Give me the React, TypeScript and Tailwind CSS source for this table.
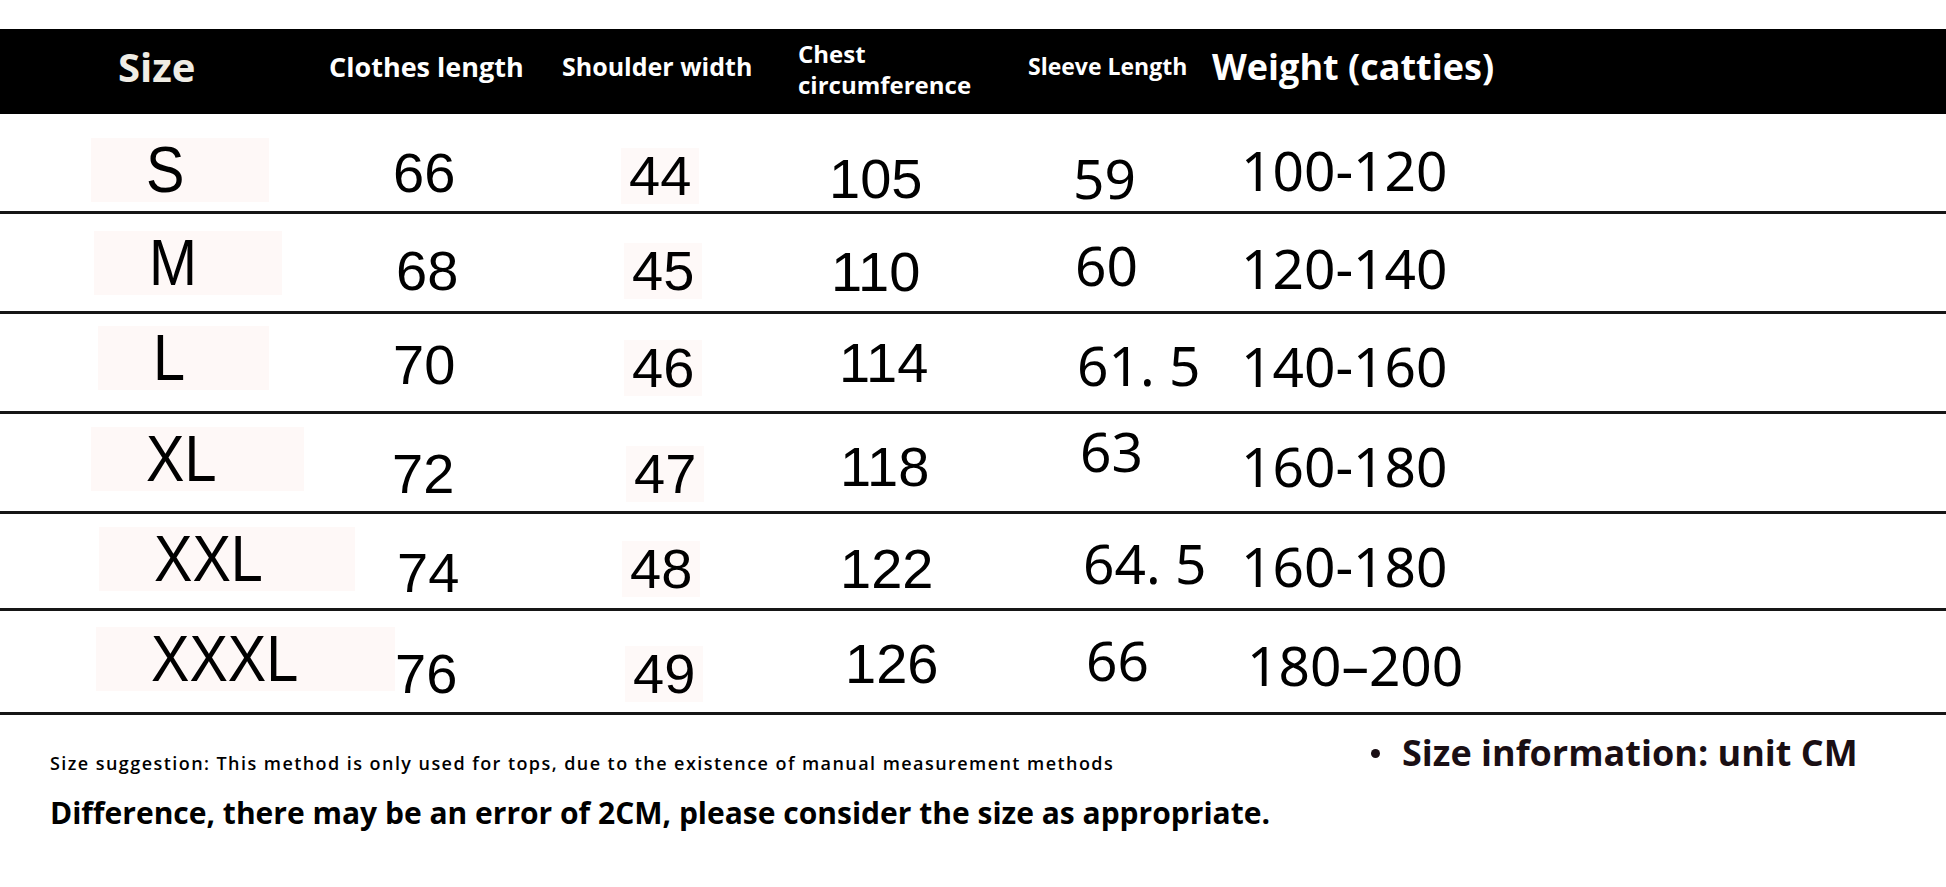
type Cell = { t: string; c: string };

const rows: { h: string; cells: Cell[] }[] = [
  {
    h: "h-[100px]",
    cells: [
      { t: "S", c: "pl-[146px] pt-[24px]" },
      { t: "66", c: "pl-[3px] pt-[31px]" },
      { t: "44", c: "pl-[1px] pt-[34px]" },
      { t: "105", c: "pl-[1px] pt-[37px]" },
      { t: "59", c: "pl-[1px] pt-[36px]" },
      { t: "100-120", c: "pl-[1px] pt-[28px]" },
    ],
  },
  {
    h: "h-[100px]",
    cells: [
      { t: "M", c: "pl-[149px] pt-[17px]" },
      { t: "68", c: "pl-[6px] pt-[29px]" },
      { t: "45", c: "pl-[4px] pt-[29px]" },
      { t: "110", c: "pl-[3px] pt-[30px]" },
      { t: "60", c: "pl-[3px] pt-[23px]" },
      { t: "120-140", c: "pl-[1px] pt-[26px]" },
    ],
  },
  {
    h: "h-[100px]",
    cells: [
      { t: "L", c: "pl-[153px] pt-[12px]" },
      { t: "70", c: "pl-[3px] pt-[23px]" },
      { t: "46", c: "pl-[4px] pt-[26px]" },
      { t: "114", c: "pl-[11px] pt-[21px]" },
      { t: "61. 5", c: "pl-[5px] pt-[23px]" },
      { t: "140-160", c: "pl-[1px] pt-[24px]" },
    ],
  },
  {
    h: "h-[100px]",
    cells: [
      { t: "XL", c: "pl-[146px] pt-[13px]" },
      { t: "72", c: "pl-[2px] pt-[32px]" },
      { t: "47", c: "pl-[6px] pt-[32px]" },
      { t: "118", c: "pl-[12px] pt-[25px]" },
      { t: "63", c: "pl-[8px] pt-[9px]" },
      { t: "160-180", c: "pl-[1px] pt-[24px]" },
    ],
  },
  {
    h: "h-[97px]",
    cells: [
      { t: "XXL", c: "pl-[154px] pt-[13px]" },
      { t: "74", c: "pl-[7px] pt-[31px]" },
      { t: "48", c: "pl-[2px] pt-[27px]" },
      { t: "122", c: "pl-[12px] pt-[27px]" },
      { t: "64. 5", c: "pl-[11px] pt-[21px]" },
      { t: "160-180", c: "pl-[1px] pt-[24px]" },
    ],
  },
  {
    h: "h-[104px]",
    cells: [
      { t: "XXXL", c: "pl-[151px] pt-[16px]" },
      { t: "76", c: "pl-[5px] pt-[35px]" },
      { t: "49", c: "pl-[5px] pt-[35px]" },
      { t: "126", c: "pl-[17px] pt-[25px]" },
      { t: "66", c: "pl-[14px] pt-[21px]" },
      { t: "180–200", c: "pl-[7px] pt-[26px]" },
    ],
  },
];

const arial = "font-['Liberation_Sans',Arial,sans-serif]";
const yahei = "font-['Noto_Sans','Noto_Sans_CJK_SC',sans-serif]";

function SizeRow({ h, cells }: { h: string; cells: Cell[] }) {
  const [size, len, shoulder, chest, sleeve, weight] = cells;
  return (
    <div className={`grid grid-cols-[390px_238px_200px_244px_168px_1fr] items-start border-b-[3px] border-[#161616] ${h}`}>
      <div className={size.c}>
        <span className="inline-block -ml-[55px] pl-[55px] pr-[80px] bg-[#fef8f7]">
          <span className={`inline-block origin-left scale-x-90 text-[64px] leading-none ${arial}`}>{size.t}</span>
        </span>
      </div>
      <div className={`${len.c} text-[56px] leading-none ${arial}`}>{len.t}</div>
      <div className={shoulder.c}>
        <span className={`inline-block -ml-[8px] px-[8px] bg-[#fef9f8] text-[56px] leading-none ${arial}`}>{shoulder.t}</span>
      </div>
      <div className={`${chest.c} text-[56px] leading-none ${arial}`}>{chest.t}</div>
      <div className={`${sleeve.c} text-[55px] leading-none whitespace-pre ${yahei}`}>{sleeve.t}</div>
      <div className={`${weight.c} text-[55px] leading-none ${yahei}`}>{weight.t}</div>
    </div>
  );
}

export default function App() {
  return (
    <div className="w-full min-h-screen bg-white text-black font-['Open_Sans',sans-serif] pt-[29px]">
      {/* Header bar */}
      <div className="h-[85px] pb-[10px] bg-black text-white font-bold grid grid-cols-[329px_233px_236px_230px_184px_1fr] items-center">
        <div className="pl-[118px] text-[40px] leading-none text-[#efece4]">Size</div>
        <div className="text-[27px] leading-none">Clothes length</div>
        <div className="text-[25px] leading-none">Shoulder width</div>
        <div className="text-[24px] leading-[31px] pt-[4px]">
          <div>Chest</div>
          <div>circumference</div>
        </div>
        <div className="text-[23px] leading-none">Sleeve Length</div>
        <div className="text-[36px] leading-none">Weight (catties)</div>
      </div>

      {rows.map((r) => (
        <SizeRow key={r.cells[0].t} h={r.h} cells={r.cells} />
      ))}

      {/* Notes */}
      <div className="grid grid-cols-[1371px_1fr] items-start">
        <div className="pl-[50px] pt-[36px]">
          <p className="text-[18px] leading-[24px] font-semibold tracking-[0.08em]">
            Size suggestion: This method is only used for tops, due to the existence of manual measurement methods
          </p>
          <p className="mt-[22px] text-[30px] leading-[32px] font-bold">
            Difference, there may be an error of 2CM, please consider the size as appropriate.
          </p>
        </div>
        <div className="pt-[18px] flex items-center gap-[22px] text-[#1a0f14]">
          <span className="w-[9px] h-[9px] rounded-full bg-[#1a0f14]" />
          <span className="text-[36px] leading-[40px] font-bold">Size information: unit CM</span>
        </div>
      </div>
    </div>
  );
}
